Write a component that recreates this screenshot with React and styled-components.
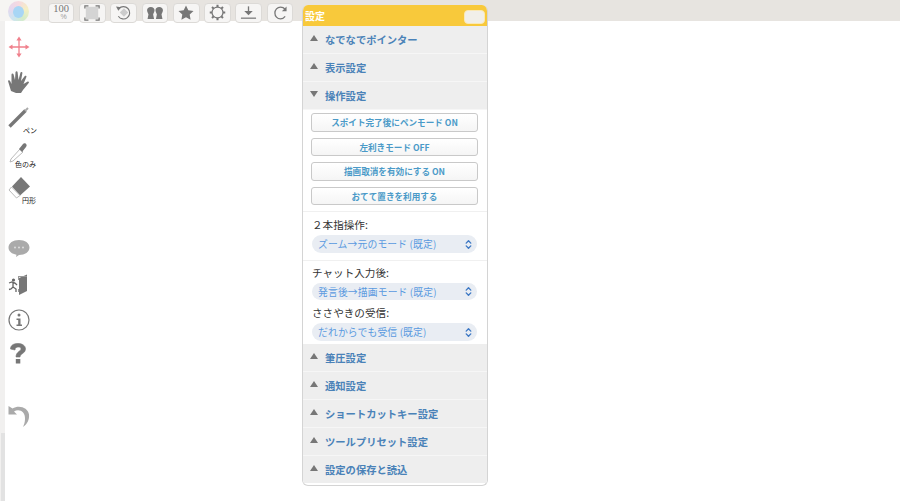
import React from "react";
import styled, { createGlobalStyle } from "styled-components";
import { ChevronsUpDown } from "lucide-react";

const GlobalStyle = createGlobalStyle`
  html, body { margin: 0; padding: 0; background: #fff; }
  body { font-family: "Liberation Sans", "Noto Sans CJK JP", sans-serif; }
  #root { width: 900px; height: 501px; overflow: hidden; position: relative; }
`;

const Page = styled.div`
  width: 900px;
  height: 501px;
  display: flex;
  flex-direction: column;
  position: relative;
  overflow: hidden;
`;

const TopBar = styled.div`
  height: 21px;
  flex: none;
  display: flex;
  background: #e7e4e0;
`;

const LogoCell = styled.div`
  width: 40px;
  flex: none;
  background: #f6f5f3;
  padding-left: 8px;
  box-sizing: border-box;
  overflow: hidden;
`;

const Logo = styled.div`
  width: 21px;
  height: 21px;
  margin-top: 1px;
  border-radius: 50%;
  background: conic-gradient(#f6d9e0, #f5efc4, #d4ecc8, #cde5f0, #e6d8ee, #f6d9e0);
  display: flex;
  align-items: center;
  justify-content: center;
  &::after {
    content: "";
    width: 11px;
    height: 12px;
    border-radius: 50%;
    background: #a8d6f5;
  }
`;

const TopButtons = styled.div`
  display: flex;
  gap: 4.6px;
  padding: 2.5px 0 0 7.7px;
`;

const TopButton = styled.div`
  width: 26.7px;
  height: 20px;
  box-sizing: border-box;
  background: #f6f5f4;
  border: 1px solid #dcdad7;
  border-radius: 4px;
  display: flex;
  align-items: center;
  justify-content: center;
  position: relative;
  color: #777;
  svg { display: block; }
`;

const ZoomText = styled.div`
  display: flex;
  flex-direction: column;
  align-items: center;
  margin-top: -1px;
`;

const ZoomValue = styled.span`
  font-family: "Liberation Serif", serif;
  color: #777;
  font-size: 10.5px;
  line-height: 9px;
`;

const ZoomUnit = styled.span`
  font-family: "Liberation Sans", sans-serif;
  font-size: 7px;
  line-height: 7px;
  margin-left: 5px;
  color: #999;
`;

const Body = styled.div`
  flex: 1;
  display: flex;
`;

const Sidebar = styled.div`
  width: 40px;
  box-sizing: border-box;
  border-left: 5px solid #f1f0ef;
  display: flex;
  flex-direction: column;
  align-items: flex-start;
  padding: 15px 0 0 3px;
  position: relative;
  &::after {
    content: "";
    position: absolute;
    left: -4px;
    top: 412px;
    bottom: 0;
    width: 4px;
    background: #e2e2e2;
  }
`;

const Tool = styled.div`
  position: relative;
  width: 26px;
  height: ${(p) => p.$h}px;
  flex: none;
  svg { display: block; }
`;

const ToolLabel = styled.div`
  position: absolute;
  left: ${(p) => p.$left}px;
  top: ${(p) => p.$top}px;
  font-family: "Noto Sans CJK JP", sans-serif;
  font-size: 7px;
  line-height: 8px;
  color: #222;
  white-space: nowrap;
`;

const Panel = styled.div`
  position: absolute;
  left: 302px;
  top: 5px;
  width: 186px;
  height: 481px;
  box-sizing: border-box;
  border: 1px solid #d4d4d4;
  border-top: 0;
  border-radius: 6px;
  background: #fff;
  display: flex;
  flex-direction: column;
  overflow: hidden;
  font-family: "Noto Sans CJK JP", sans-serif;
`;

const PanelHead = styled.div`
  height: 21px;
  flex: none;
  margin: 0 -1px;
  background: #f8c93b;
  color: #fff;
  font-size: 10px;
  font-weight: 700;
  line-height: 21px;
  padding: 0 3px 0 3px;
  display: flex;
  justify-content: space-between;
  align-items: center;
`;

const HeadButton = styled.div`
  width: 21px;
  height: 14px;
  margin-top: 3px;
  border-radius: 4px;
  background: #f1efe9;
  border: 1px solid #fbe9b5;
  box-sizing: border-box;
`;

const Row = styled.div`
  height: 28px;
  flex: none;
  box-sizing: border-box;
  background: #eeeeee;
  border-bottom: 1px solid #f6f6f6;
  display: flex;
  align-items: center;
  padding-left: 7px;
  color: #4a82b8;
  font-size: 10.3px;
  font-weight: 700;
  &:last-child { border-bottom: 0; height: 27px; }
`;

const Arrow = styled.span`
  width: 0;
  height: 0;
  margin: -3px 7px 0 0;
  border-left: 4px solid transparent;
  border-right: 4px solid transparent;
  ${(p) => (p.$open ? "border-top: 6px solid #777;" : "border-bottom: 6px solid #777;")}
`;

const Content = styled.div`
  height: 234px;
  flex: none;
  background: #fff;
  display: flex;
  flex-direction: column;
`;

const ButtonGroup = styled.div`
  display: flex;
  flex-direction: column;
  gap: 6px;
  padding: 3px 9px 6px 8px;
  border-bottom: 1px solid #f0f0f0;
`;

const ActionButton = styled.div`
  height: 18.6px;
  box-sizing: border-box;
  border: 1px solid #c9c9c9;
  border-radius: 3px;
  background: linear-gradient(#fff, #f5f5f5);
  color: #4a9ac8;
  font-size: 8.6px;
  font-weight: 700;
  line-height: 16.6px;
  text-align: center;
  white-space: nowrap;
`;

const Field = styled.div`
  padding: ${(p) => p.$pad};
  ${(p) => p.$line && "border-bottom: 1px solid #f0f0f0;"}
`;

const FieldLabel = styled.div`
  font-size: 10.6px;
  line-height: 14px;
  color: #333;
`;

const Select = styled.div`
  height: 17.5px;
  margin-top: 3px;
  margin-right: 1px;
  border-radius: 9px;
  background: #e9edf3;
  color: #5a9ae0;
  font-size: 9.8px;
  letter-spacing: 0.15px;
  display: flex;
  align-items: center;
  justify-content: space-between;
  padding: 0 3px 0 6px;
  white-space: nowrap;
  svg { color: #3d78c4; }
`;

const Move = () => (
  <svg width="22" height="22" viewBox="0 0 22 22" fill="#f0808c" stroke="#f0808c">
    <path d="M11 3v16M3 11h16" strokeWidth="1.300" fill="none" />
    <path d="M11 0.500l2.600 4h-5.200zM11 21.500l2.600-4h-5.200zM0.500 11l4-2.600v5.200zM21.500 11l-4-2.600v5.200z" strokeWidth="0" />
  </svg>
);

const Hand = () => (
  <svg width="22" height="24" viewBox="0 0 22 24" fill="#777">
    <path d="M8 23l-5-2-3-10c0-1 1.500-1 2-.2l1.500 3.200L3.500 4.500c0-1.200 1.800-1.200 2.100 0L7 10 7.500 2.200c.2-1.200 2-1.200 2.100 0L10.500 10 12.500 2.500c.4-1 2-.7 1.900.4L13 11l3.800-5c.8-.8 2-.1 1.600.9L15.500 14l4.200-2.500c1-.4 1.700.7 1 1.500L15 20l-2 3z" />
  </svg>
);

const Pen = () => (
  <svg width="22" height="22" viewBox="0 0 22 22">
    <path d="M1.500 20.500L17.500 4.500" stroke="#777" strokeWidth="3.400" />
    <path d="M17 5L20 2" stroke="#aaa" strokeWidth="2" />
  </svg>
);

const Dropper = () => (
  <svg width="22" height="24" viewBox="0 0 22 24">
    <path d="M3 19L12 9l3 3-10 9-3 1z" fill="#fff" stroke="#aaa" strokeWidth="0.800" />
    <path d="M11 9l4-5c2-2 5 1 3 3l-4 5z" fill="#777" />
  </svg>
);

const Eraser = () => (
  <svg width="22" height="24" viewBox="0 0 22 24">
    <path d="M13 1l9 9.500-10 9-8-9z" fill="#777" />
    <path d="M3.500 11L1 14l7.500 8 3.500-2.500z" fill="#fff" stroke="#aaa" strokeWidth="0.800" />
  </svg>
);

const Chat = () => (
  <svg width="22" height="20" viewBox="0 0 22 20">
    <path d="M11 1c6 0 10.500 3 10.500 7.500S17 16 11 16l-3 2 .5-2.300C4 15 .5 12.500.5 8.500.5 4 5 1 11 1z" fill="#aaa" />
    <circle cx="7" cy="8.500" r="1" fill="#ddd" />
    <circle cx="11" cy="8.500" r="1" fill="#ddd" />
    <circle cx="15" cy="8.500" r="1" fill="#ddd" />
  </svg>
);

const Exit = () => (
  <svg width="20" height="22" viewBox="0 0 20 22">
    <path d="M11 4l8-3.500V17l-8 4z" fill="#777" />
    <path d="M10 2h9v1h-8v3h-1zM10 15h1v3h-1z" fill="#999" />
    <circle cx="5.500" cy="6" r="1.600" fill="#666" />
    <path d="M1 9l3-1 3 1 2 2M5 8v5l3 2v3M5 13l-2 2-2 .5M7 9l-2 0" stroke="#666" strokeWidth="1.300" fill="none" />
  </svg>
);

const Info = () => (
  <svg width="22" height="22" viewBox="0 0 22 22">
    <circle cx="11" cy="11" r="10" fill="none" stroke="#777" strokeWidth="1.200" />
    <circle cx="11" cy="6" r="1.500" fill="#777" />
    <path d="M8.500 9.500H12.500V15.500H14V17H8.500V15.500H10.200V11H8.500z" fill="#777" />
  </svg>
);

const Question = () => (
  <svg width="20" height="24" viewBox="0 0 20 24">
    <path d="M2.500 8C2.500 4 6 2.500 10 2.500S17.500 4.500 17.500 8c0 4.500-5.500 4.500-5.500 8H8c0-5.500 5-5.500 5-8.200C13 6.300 11.500 6 10 6S7 6.800 7 9z" fill="#777" stroke="#777" strokeWidth="0.600" />
    <rect x="7.800" y="18" width="4.500" height="4.500" fill="#777" />
  </svg>
);

const Undo = () => (
  <svg width="22" height="24" viewBox="0 0 22 24">
    <path d="M0.500 2v8.500H9L6 7.500C11 4.500 17.500 7.500 17 15c-.1 3-.8 5.500-2 8C19.500 20 21.500 15.500 21 10.500 20 3.500 11 .5 4.500 4.500z" fill="#aaa" />
  </svg>
);

const Frame = () => (
  <svg width="16" height="16" viewBox="0 0 18 18">
    <rect x="2" y="2" width="14" height="14" fill="#d4d4d4" />
    <path d="M1 4V1h4M13 1h4v3M17 14v3h-4M5 17H1v-3" stroke="#777" strokeWidth="1.400" fill="none" />
  </svg>
);

const Rotate = () => (
  <svg width="17" height="15" viewBox="0 0 18 16">
    <path d="M4 4a6.600 6.600 0 1 1-.5 8" stroke="#777" strokeWidth="1.200" fill="none" />
    <path d="M1 1.500L6.500 2.500 3.500 6z" fill="#777" />
    <path d="M9.500 3.500L14 8l-4.500 4.500L5 8z" fill="#ccc" />
  </svg>
);

const People = () => (
  <svg width="18" height="14" viewBox="0 0 19 15" fill="#777">
    <path d="M5 1c2.500 0 4 1.500 4 3.500S7.500 8 7.500 9L8.500 14H1.500L2.500 9C2.500 8 1 6.500 1 4.500S2.500 1 5 1z" />
    <path d="M14 1c2.500 0 4 1.500 4 3.500S16.500 8 16.500 9L17.500 14H10.500L11.500 9C11.500 8 10 6.500 10 4.500S11.500 1 14 1z" />
  </svg>
);

const Star = () => (
  <svg width="16" height="15" viewBox="0 0 16 15" fill="#777">
    <path d="M8 0.500l2.300 4.800 5.200.7-3.800 3.600.9 5.200L8 12.300l-4.600 2.500.9-5.200L.5 6l5.200-.7z" />
  </svg>
);

const Gear = () => (
  <svg width="17" height="17" viewBox="0 0 18 18">
    <circle cx="9" cy="9" r="5.800" fill="none" stroke="#777" strokeWidth="1.300" />
    <path d="M9 .8v2.400M9 14.800v2.400M.8 9h2.400M14.800 9h2.400M3.200 3.200l1.700 1.700M13.100 13.100l1.700 1.700M14.800 3.200l-1.700 1.700M4.900 13.100l-1.700 1.700" stroke="#777" strokeWidth="2.200" />
  </svg>
);

const Download = () => (
  <svg width="17" height="15" viewBox="0 0 18 15">
    <path d="M9 1v8" stroke="#777" strokeWidth="1.400" />
    <path d="M4.500 6L9 10.500 13.500 6z" fill="#777" />
    <path d="M1 13.500h16" stroke="#777" strokeWidth="1.300" />
  </svg>
);

const Redo = () => (
  <svg width="15" height="14" viewBox="0 0 16 15">
    <path d="M13 3.500C11.500 1.800 9.800 1.200 8 1.200 4.500 1.200 2 4 2 7.500s2.500 6.300 6 6.300c2 0 3.800-1 5-2.600" stroke="#777" strokeWidth="1.400" fill="none" />
    <path d="M14.500 0.500v5h-5z" fill="#777" />
  </svg>
);

const topIcons = [Frame, Rotate, People, Star, Gear, Download, Redo];

const upperRows = ["なでなでポインター", "表示設定"];
const lowerRows = ["筆圧設定", "通知設定", "ショートカットキー設定", "ツールプリセット設定", "設定の保存と読込"];
const actions = ["スポイト完了後にペンモード ON", "左利きモード OFF", "描画取消を有効にする ON", "おてて置きを利用する"];

const SettingRow = ({ title, open }) => (
  <Row>
    <Arrow $open={open} />
    {title}
  </Row>
);

const SelectBox = ({ value }) => (
  <Select>
    {value}
    <ChevronsUpDown size={11} strokeWidth={3} />
  </Select>
);

const App = () => {
  return (
    <Page>
      <GlobalStyle />
      <TopBar>
        <LogoCell>
          <Logo />
        </LogoCell>
        <TopButtons>
          <TopButton>
            <ZoomText>
              <ZoomValue>100</ZoomValue>
              <ZoomUnit>%</ZoomUnit>
            </ZoomText>
          </TopButton>
          {topIcons.map((Icon, i) => (
            <TopButton key={i}>
              <Icon />
            </TopButton>
          ))}
        </TopButtons>
      </TopBar>
      <Body>
        <Sidebar>
          <Tool $h={34}><Move /></Tool>
          <Tool $h={36}><Hand /></Tool>
          <Tool $h={34}>
            <Pen />
            <ToolLabel $left={15} $top={20}>ペン</ToolLabel>
          </Tool>
          <Tool $h={36}>
            <Dropper />
            <ToolLabel $left={7} $top={20}>色のみ</ToolLabel>
          </Tool>
          <Tool $h={63}>
            <Eraser />
            <ToolLabel $left={14} $top={20}>円形</ToolLabel>
          </Tool>
          <Tool $h={35}><Chat /></Tool>
          <Tool $h={35}><Exit /></Tool>
          <Tool $h={32}><Info /></Tool>
          <Tool $h={63}><Question /></Tool>
          <Tool $h={30}><Undo /></Tool>
        </Sidebar>
      </Body>
      <Panel>
        <PanelHead>
          設定
          <HeadButton />
        </PanelHead>
        {upperRows.map((t) => (
          <SettingRow key={t} title={t} />
        ))}
        <SettingRow title="操作設定" open />
        <Content>
          <ButtonGroup>
            {actions.map((a) => (
              <ActionButton key={a}>{a}</ActionButton>
            ))}
          </ButtonGroup>
          <Field $pad="6px 9px 7px 9px" $line>
            <FieldLabel>２本指操作:</FieldLabel>
            <SelectBox value="ズーム→元のモード (既定)" />
          </Field>
          <Field $pad="5px 9px 0 9px">
            <FieldLabel>チャット入力後:</FieldLabel>
            <SelectBox value="発言後→描画モード (既定)" />
          </Field>
          <Field $pad="6px 9px 0 9px">
            <FieldLabel>ささやきの受信:</FieldLabel>
            <SelectBox value="だれからでも受信 (既定)" />
          </Field>
        </Content>
        {lowerRows.map((t) => (
          <SettingRow key={t} title={t} />
        ))}
      </Panel>
    </Page>
  );
};

export default App;
